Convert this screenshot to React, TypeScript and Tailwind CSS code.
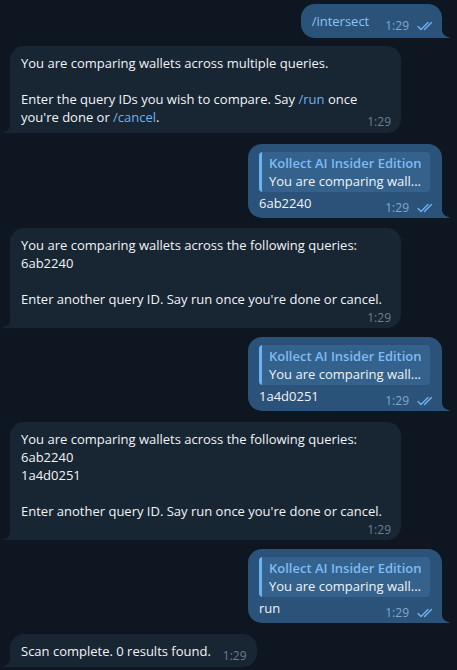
import React from "react";

type Line = { text: string; link?: boolean }[];

const Checks = () => (
  <svg width="17" height="10" viewBox="0 0 17 10" fill="none" className="shrink-0">
    <path d="M1 5.5l3 3 7-7" stroke="#6fb2f2" strokeWidth="1.4" strokeLinecap="round" strokeLinejoin="round" />
    <path d="M7.5 8.5l7-7" stroke="#6fb2f2" strokeWidth="1.4" strokeLinecap="round" strokeLinejoin="round" />
  </svg>
);

const TailIn = () => (
  <svg width="9" height="13" viewBox="0 0 9 13" className="absolute bottom-0 -left-[8px]">
    <path d="M9 0 Q9 11 0.5 12.5 Q0 13 1 13 H9 Z" fill="#182533" />
  </svg>
);

const TailOut = () => (
  <svg width="9" height="13" viewBox="0 0 9 13" className="absolute bottom-0 -right-[8px]">
    <path d="M0 0 Q0 11 8.5 12.5 Q9 13 8 13 H0 Z" fill="#2b5278" />
  </svg>
);

const renderLine = (line: Line) =>
  line.map((part, i) =>
    part.link ? (
      <span key={i} className="text-[#6ab3f3]">
        {part.text}
      </span>
    ) : (
      <span key={i}>{part.text}</span>
    )
  );

// incoming message, time on the last line or on its own row
const Incoming = ({
  lines,
  ownRow,
  className,
}: {
  lines: Line[];
  ownRow?: boolean;
  className: string;
}) => {
  const body = ownRow ? lines : lines.slice(0, -1);
  const last = lines[lines.length - 1];
  return (
    <div className={`relative self-start ml-[10px] bg-[#182533] rounded-[14px] rounded-bl-none pl-[11px] pr-[10px] pt-2 ${ownRow ? "pb-0" : "pb-[7px]"} ${className}`}>
      {body.map((l, i) => (
        <div key={i} className="h-[18px] whitespace-nowrap">
          {renderLine(l)}
        </div>
      ))}
      {ownRow ? (
        <div className="flex justify-end h-[20px] leading-[20px] text-[12px] text-[#6c7e90]">1:29</div>
      ) : (
        <div className="flex items-end justify-between gap-3 whitespace-nowrap">
          <span className="h-[18px]">{renderLine(last)}</span>
          <span className="relative top-[3px] text-[12px] leading-[14px] text-[#6c7e90]">1:29</span>
        </div>
      )}
      <TailIn />
    </div>
  );
};

const Outgoing = ({
  text,
  reply,
  command,
  className,
}: {
  text: string;
  reply?: boolean;
  command?: boolean;
  className: string;
}) => (
  <div className={`relative self-end mr-[15px] bg-[#2b5278] rounded-[14px] rounded-br-none pl-[11px] pr-[8px] pt-2 ${reply ? "w-[194px] pb-[6px]" : "pb-2"} ${className}`}>
    {reply && (
      <div className="flex mb-[2px] mr-[4px] rounded-[4px] bg-[#34628d] overflow-hidden">
        <div className="w-[3px] bg-[#6ab3f3]" />
        <div className="pl-[7px] py-[2px]">
          <div className="h-[18px] font-semibold text-[#7dbcf5] whitespace-nowrap">Kollect AI Insider Edition</div>
          <div className="h-[18px] text-[#f0f4f8] whitespace-nowrap">You are comparing wall...</div>
        </div>
      </div>
    )}
    <div className={`flex items-end justify-between ${command ? "gap-[16px]" : "gap-3"}`}>
      <span className={`h-[18px] whitespace-nowrap ${command ? "text-[#8cc4f5]" : ""}`}>{text}</span>
      <span className="relative top-[3px] flex items-center gap-[8px] text-[12px] leading-[14px] text-[#7ea9d1]">
        1:29
        <Checks />
      </span>
    </div>
    <TailOut />
  </div>
);

const App: React.FC = () => {
  return (
    <div
      className="h-[670px] w-full overflow-hidden bg-[#0e1621] flex flex-col text-[13px] leading-[18px] text-[#f0f4f8]"
      style={{ fontFamily: '"Open Sans", "Noto Sans", sans-serif' }}
    >
      <Outgoing text="/intersect" command className="mt-[4px]" />
      <Incoming
        className="mt-[8px] w-[391px]"
        lines={[
          [{ text: "You are comparing wallets across multiple queries." }],
          [{ text: "" }],
          [{ text: "Enter the query IDs you wish to compare. Say " }, { text: "/run", link: true }, { text: " once" }],
          [{ text: "you're done or " }, { text: "/cancel", link: true }, { text: "." }],
        ]}
      />
      <Outgoing text="6ab2240" reply className="mt-[11px]" />
      <Incoming
        className="mt-[10px] w-[391px]"
        ownRow
        lines={[
          [{ text: "You are comparing wallets across the following queries:" }],
          [{ text: "6ab2240" }],
          [{ text: "" }],
          [{ text: "Enter another query ID. Say run once you're done or cancel." }],
        ]}
      />
      <Outgoing text="1a4d0251" reply className="mt-[9px]" />
      <Incoming
        className="mt-[11px] w-[391px]"
        ownRow
        lines={[
          [{ text: "You are comparing wallets across the following queries:" }],
          [{ text: "6ab2240" }],
          [{ text: "1a4d0251" }],
          [{ text: "" }],
          [{ text: "Enter another query ID. Say run once you're done or cancel." }],
        ]}
      />
      <Outgoing text="run" reply className="mt-[9px]" />
      <Incoming
        className="mt-[11px] pr-[9px]"
        lines={[[{ text: "Scan complete. 0 results found." }]]}
      />
    </div>
  );
};

export default App;
